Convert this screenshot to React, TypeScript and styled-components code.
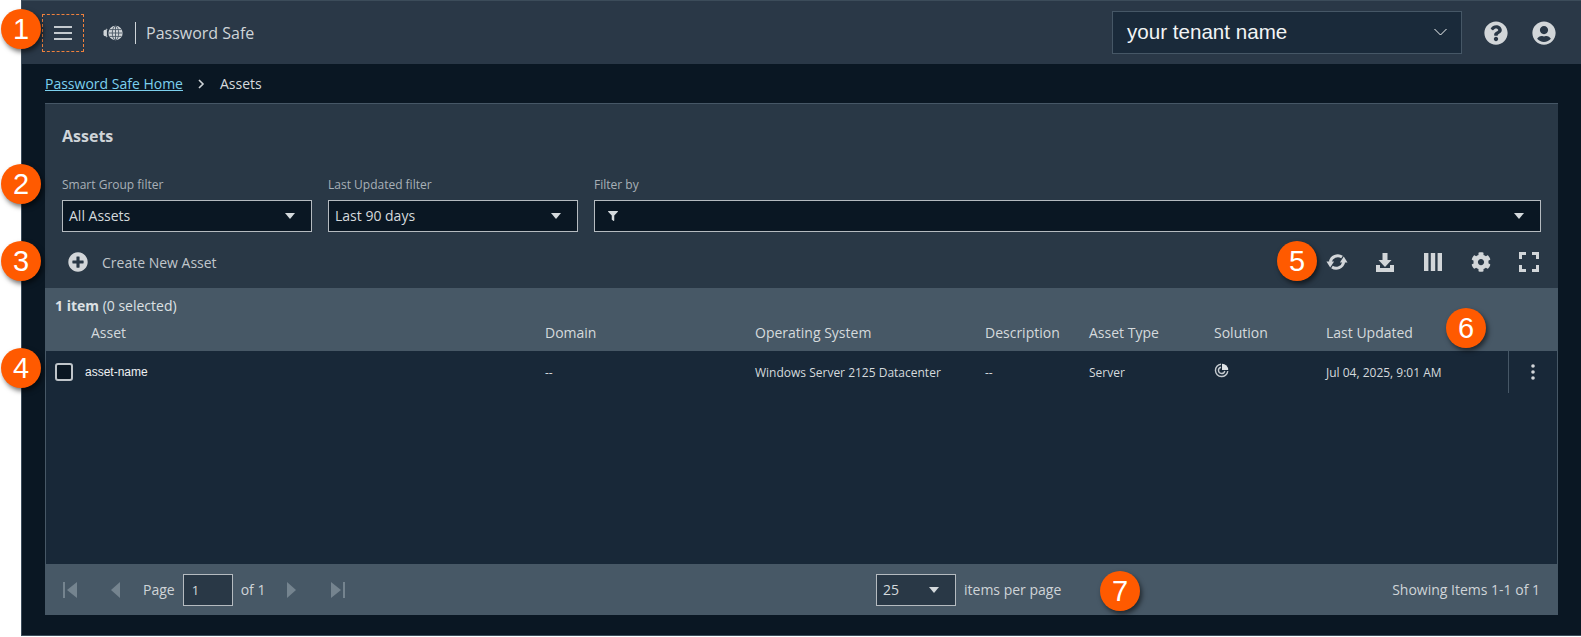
import * as React from 'react';
import styled, { createGlobalStyle } from 'styled-components';
import { FaCog, FaFilter, FaPlusCircle, FaQuestionCircle, FaUserCircle } from 'react-icons/fa';

const GlobalStyle = createGlobalStyle`
    html, body {
        margin: 0;
        padding: 0;
        background: #fff;
        font-family: 'Open Sans', 'Noto Sans', sans-serif;
    }
`;

const Page = styled.div`
    position: relative;
    width: 1581px;
    height: 637px;
    padding-left: 21px;
    box-sizing: border-box;
    overflow: hidden;
`;

const Frame = styled.div`
    height: 636px;
    display: flex;
    flex-direction: column;
    background: #0a1723;
    border-left: 1px solid #3c4c5a;
    border-top: 1px solid #3c4c5a;
    border-bottom: 1px solid #3c4c5a;
    box-sizing: border-box;
`;

const Header = styled.header`
    height: 63px;
    flex: none;
    display: flex;
    align-items: center;
    background: #2a3847;
    padding-left: 20px;
`;

const MenuButton = styled.button`
    width: 42px;
    height: 38px;
    margin-top: 1px;
    padding: 0;
    display: flex;
    align-items: center;
    justify-content: center;
    background: none;
    border: 1px dashed #f0813c;
`;

const Brand = styled.div`
    display: flex;
    align-items: center;
    margin-left: 20px;
    color: #cfd4d8;
    font-size: 16px;
`;

const BrandRule = styled.span`
    width: 1px;
    height: 22px;
    margin: 0 10px 0 12px;
    background: #cfd4d8;
`;

const TenantSelect = styled.div`
    width: 350px;
    height: 43px;
    margin-left: auto;
    padding: 0 14px 2px;
    display: flex;
    align-items: center;
    justify-content: space-between;
    box-sizing: border-box;
    background: #1a2a3a;
    border: 1px solid #465766;
    color: #f2f4f5;
    font-family: 'Liberation Sans', Arial, sans-serif;
    font-size: 20.6px;
`;

const HeaderIcons = styled.div`
    display: flex;
    align-items: center;
    gap: 24px;
    margin: 0 25px 0 22px;
    color: #d2d6d9;
    font-size: 24px;

    svg {
        display: block;
    }
`;

const Breadcrumb = styled.nav`
    height: 39px;
    flex: none;
    padding-left: 23px;
    display: flex;
    align-items: center;
    font-size: 14px;
    color: #d5dadd;
`;

const Crumb = styled.a`
    color: #7cd0ee;
    text-decoration: underline;
`;

const CrumbArrow = styled.span`
    margin: 0 15px;
    display: flex;
`;

const Panel = styled.main`
    width: 1513px;
    height: 512px;
    margin-left: 23px;
    display: flex;
    flex-direction: column;
    background: #293846;
    border-top: 1px solid #465766;
    box-sizing: border-box;
`;

const Title = styled.h1`
    margin: 0;
    padding: 21px 0 0 17px;
    height: 47px;
    box-sizing: border-box;
    font-size: 16px;
    line-height: 22px;
    font-weight: 700;
    color: #cfd4d8;
`;

const Filters = styled.div`
    display: flex;
    gap: 16px;
    padding: 26px 17px 0;
`;

const Filter = styled.label<{ $grow?: boolean }>`
    display: flex;
    flex-direction: column;
    gap: 7px;
    width: ${props => (props.$grow ? 'auto' : '250px')};
    flex: ${props => (props.$grow ? 1 : 'none')};
    font-size: 12px;
    line-height: 16px;
    color: #a8b0b7;
`;

const SelectBox = styled.div`
    height: 32px;
    padding: 0 6px;
    display: flex;
    align-items: center;
    justify-content: space-between;
    box-sizing: border-box;
    background: #0a1723;
    border: 1px solid #b5bbc0;
    color: #d5dadd;
    font-size: 14px;
`;

const Caret = styled.span`
    width: 0;
    height: 0;
    margin-right: 10px;
    border-left: 5px solid transparent;
    border-right: 5px solid transparent;
    border-top: 6px solid #d5dadd;
`;

const Toolbar = styled.div`
    height: 56px;
    flex: none;
    display: flex;
    align-items: center;
    padding: 4px 5px 0 23px;
    box-sizing: border-box;
    color: #bcc3c8;
    font-size: 14px;
`;

const CreateButton = styled.div`
    display: flex;
    align-items: center;
    gap: 14px;
    font-size: 14px;
    color: #c0c6cb;
`;

const ToolIcons = styled.div`
    margin-left: auto;
    display: flex;
    align-items: center;
    color: #d2d6d9;
`;

const ToolIcon = styled.span`
    width: 48px;
    height: 24px;
    display: flex;
    align-items: center;
    justify-content: center;
`;

const Grid = styled.section`
    flex: 1;
    display: flex;
    flex-direction: column;
    background: #475866;
`;

const Count = styled.div`
    height: 32px;
    flex: none;
    padding: 8px 0 0 10px;
    box-sizing: border-box;
    font-size: 14px;
    line-height: 20px;
    color: #dde1e4;

    strong {
        font-weight: 700;
    }
`;

const columns = '499px 210px 230px 104px 125px 112px 182px 48px';

const HeadRow = styled.div`
    height: 31px;
    flex: none;
    display: grid;
    grid-template-columns: ${columns};
    align-items: center;
    padding-bottom: 6px;
    box-sizing: border-box;
    margin-left: 1px;
    font-size: 14px;
    color: #d5dadd;
`;

const HeadCell = styled.div<{ $first?: boolean }>`
    padding-left: ${props => (props.$first ? '45px' : '0')};
    white-space: nowrap;
`;

const Body = styled.div`
    flex: 1;
    margin: 0 1px;
    background: #182838;
`;

const Row = styled.div`
    height: 42px;
    display: grid;
    grid-template-columns: ${columns};
    align-items: center;
    font-size: 12px;
    color: #d5dadd;
`;

const AssetCell = styled.div`
    display: flex;
    align-items: center;
    gap: 12px;
    padding-left: 9px;
    font-family: 'Liberation Sans', Arial, sans-serif;
    font-size: 12px;
    color: #eef0f2;
`;

const Checkbox = styled.span`
    width: 18px;
    height: 18px;
    box-sizing: border-box;
    background: #0a1723;
    border: 2px solid #bfc5ca;
    border-radius: 3px;
`;

const Cell = styled.div`
    white-space: nowrap;
`;

const ActionCell = styled.div`
    height: 42px;
    display: flex;
    align-items: center;
    justify-content: center;
    border-left: 1px solid #465766;
`;

const Footer = styled.footer`
    height: 51px;
    flex: none;
    display: grid;
    grid-template-columns: 830px 1fr auto;
    align-items: center;
    padding: 0 18px 0 17px;
    font-size: 14px;
    color: #cfd4d8;
`;

const Pager = styled.div`
    display: flex;
    align-items: center;
`;

const PagerArrow = styled.span<{ $width: number; $gap?: number }>`
    width: ${props => props.$width}px;
    margin-left: ${props => props.$gap ?? 0}px;
    display: flex;
    color: #75848f;
`;

const PageInput = styled.div`
    width: 50px;
    height: 32px;
    margin: 0 8px;
    padding: 0 8px;
    display: flex;
    align-items: center;
    box-sizing: border-box;
    background: #293846;
    border: 1px solid #b5bbc0;
    font-size: 13px;
    color: #d5dadd;
`;

const PerPage = styled.div`
    display: flex;
    align-items: center;
    gap: 8px;
    margin-left: -16px;
`;

const PerPageSelect = styled(SelectBox)`
    width: 80px;
    background: #293846;
`;

const Badge = styled.span<{ $x: number; $y: number }>`
    position: absolute;
    left: ${props => props.$x - 20}px;
    top: ${props => props.$y - 20}px;
    width: 40px;
    height: 40px;
    display: flex;
    align-items: center;
    justify-content: center;
    border-radius: 50%;
    background: #ff5a00;
    box-shadow: 2px 3px 5px rgba(0, 0, 0, 0.55);
    color: #fff;
    font-family: 'Liberation Sans', Arial, sans-serif;
    font-size: 29px;
`;

const badges = [
    { n: 1, x: 21, y: 29 },
    { n: 2, x: 21, y: 184 },
    { n: 3, x: 21, y: 261 },
    { n: 4, x: 21, y: 368 },
    { n: 5, x: 1297, y: 261 },
    { n: 6, x: 1466, y: 328 },
    { n: 7, x: 1120, y: 591 },
];

const headers = ['Asset', 'Domain', 'Operating System', 'Description', 'Asset Type', 'Solution', 'Last Updated'];

function Globe(): React.ReactElement {
    return (
        <svg width="20" height="16" viewBox="0 0 20 16" fill="none" style={{ marginLeft: -1 }}>
            <circle cx="12.5" cy="8" r="7.2" fill="#cfd4d8" />
            <g stroke="#4a5764" strokeWidth="0.9">
                <ellipse cx="12.5" cy="8" rx="3.2" ry="7" />
                <path d="M5.5 8h14M6.4 4.6h12.2M6.4 11.4h12.2M12.5 1v14" />
            </g>
            <path d="M4 4a6.5 6.5 0 0 0 0 8" stroke="#aab1b7" strokeWidth="1.6" />
            <rect x="0.5" y="4.8" width="3.4" height="6.4" rx="1.7" fill="#cfd4d8" />
        </svg>
    );
}

function Solution(): React.ReactElement {
    return (
        <svg width="15" height="15" viewBox="0 0 15 15" fill="none" stroke="#c4cacf" strokeWidth="1.4">
            <path d="M7 1.2a6.2 6.2 0 1 0 6.8 7" />
            <path d="M7 4.2a3.2 3.2 0 1 0 3.8 3.8" />
            <path d="M8 .8a6.2 6.2 0 0 1 6.2 6.2H8z" fill="#dfe3e6" stroke="none" />
        </svg>
    );
}

function Refresh(): React.ReactElement {
    return (
        <svg width="22" height="22" viewBox="0 0 24 24" fill="#d2d6d9" stroke="none">
            <path d="M17.5 6.6A8.5 8.5 0 0 0 4.6 12" fill="none" stroke="#d2d6d9" strokeWidth="3.2" />
            <polygon points="0.5,11.5 8.8,11.5 4.6,18" />
            <path d="M6.5 17.4A8.5 8.5 0 0 0 19.4 12" fill="none" stroke="#d2d6d9" strokeWidth="3.2" />
            <polygon points="15.2,12.5 23.5,12.5 19.4,6" />
        </svg>
    );
}

function Download(): React.ReactElement {
    return (
        <svg width="18" height="19" viewBox="0 0 18 19" fill="#d2d6d9">
            <rect x="6.5" y="0" width="5" height="7" />
            <polygon points="2.5,7 15.5,7 9,14" />
            <path d="M0 12h4v3h10v-3h4v7H0z" />
        </svg>
    );
}

function Columns(): React.ReactElement {
    return (
        <svg width="20" height="20" viewBox="0 0 20 20" fill="#d2d6d9">
            <rect x="1" y="1" width="4.4" height="18" />
            <rect x="7.8" y="1" width="4.4" height="18" />
            <rect x="14.6" y="1" width="4.4" height="18" />
        </svg>
    );
}

function Fullscreen(): React.ReactElement {
    return (
        <svg width="20" height="20" viewBox="0 0 20 20" fill="none" stroke="#d2d6d9" strokeWidth="3">
            <path d="M1.5 7V1.5H7M13 1.5h5.5V7M18.5 13v5.5H13M7 18.5H1.5V13" />
        </svg>
    );
}

function Triangle({ dir, stop }: { dir: 'left' | 'right'; stop?: boolean }): React.ReactElement {
    const points = dir === 'left' ? '10,0 10,16 1,8' : '1,0 1,16 10,8';
    return (
        <svg width="14" height="16" viewBox="0 0 14 16" fill="currentColor">
            <polygon points={stop ? (dir === 'left' ? '14,0 14,16 4,8' : '0,0 0,16 10,8') : points} />
            {stop && <rect x={dir === 'left' ? 0 : 12} y="0" width="2" height="16" />}
        </svg>
    );
}

export default function App(): React.ReactElement {
    return (
        <Page>
            <GlobalStyle />
            <Frame>
                <Header>
                    <MenuButton>
                        <svg width="18" height="14" viewBox="0 0 18 14" stroke="#c4cacf" strokeWidth="2">
                            <path d="M0 1h18M0 7h18M0 13h18" />
                        </svg>
                    </MenuButton>
                    <Brand>
                        <Globe />
                        <BrandRule />
                        Password Safe
                    </Brand>
                    <TenantSelect>
                        your tenant name
                        <svg width="13" height="8" viewBox="0 0 13 8" fill="none" stroke="#f2f4f5" strokeWidth="1">
                            <path d="M.5 1l6 6 6-6" />
                        </svg>
                    </TenantSelect>
                    <HeaderIcons>
                        <FaQuestionCircle />
                        <FaUserCircle />
                    </HeaderIcons>
                </Header>
                <Breadcrumb>
                    <Crumb>Password Safe Home</Crumb>
                    <CrumbArrow>
                        <svg width="7" height="10" viewBox="0 0 7 10" fill="none" stroke="#cfd4d8" strokeWidth="1.6">
                            <path d="M1 1l4 4-4 4" />
                        </svg>
                    </CrumbArrow>
                    Assets
                </Breadcrumb>
                <Panel>
                    <Title>Assets</Title>
                    <Filters>
                        <Filter>
                            Smart Group filter
                            <SelectBox>
                                All Assets
                                <Caret />
                            </SelectBox>
                        </Filter>
                        <Filter>
                            Last Updated filter
                            <SelectBox>
                                Last 90 days
                                <Caret />
                            </SelectBox>
                        </Filter>
                        <Filter $grow>
                            Filter by
                            <SelectBox>
                                <FaFilter size={10} style={{ marginLeft: 7 }} />
                                <Caret />
                            </SelectBox>
                        </Filter>
                    </Filters>
                    <Toolbar>
                        <CreateButton>
                            <FaPlusCircle size={20} color="#d2d6d9" />
                            Create New Asset
                        </CreateButton>
                        <ToolIcons>
                            <ToolIcon><Refresh /></ToolIcon>
                            <ToolIcon><Download /></ToolIcon>
                            <ToolIcon><Columns /></ToolIcon>
                            <ToolIcon><FaCog size={20} /></ToolIcon>
                            <ToolIcon><Fullscreen /></ToolIcon>
                        </ToolIcons>
                    </Toolbar>
                    <Grid>
                        <Count>
                            <strong>1 item</strong> (0 selected)
                        </Count>
                        <HeadRow>
                            {headers.map((h, i) => (
                                <HeadCell key={h} $first={i === 0}>{h}</HeadCell>
                            ))}
                        </HeadRow>
                        <Body>
                            <Row>
                                <AssetCell>
                                    <Checkbox />
                                    asset-name
                                </AssetCell>
                                <Cell>--</Cell>
                                <Cell>Windows Server 2125 Datacenter</Cell>
                                <Cell>--</Cell>
                                <Cell>Server</Cell>
                                <Cell><Solution /></Cell>
                                <Cell>Jul 04, 2025, 9:01 AM</Cell>
                                <ActionCell>
                                    <svg width="4" height="16" viewBox="0 0 4 16" fill="#d2d6d9">
                                        <circle cx="2" cy="2" r="1.8" />
                                        <circle cx="2" cy="8" r="1.8" />
                                        <circle cx="2" cy="14" r="1.8" />
                                    </svg>
                                </ActionCell>
                            </Row>
                        </Body>
                        <Footer>
                            <Pager>
                                <PagerArrow $width={47} $gap={1}><Triangle dir="left" stop /></PagerArrow>
                                <PagerArrow $width={33}><Triangle dir="left" /></PagerArrow>
                                Page
                                <PageInput>1</PageInput>
                                of 1
                                <PagerArrow $width={45} $gap={21}><Triangle dir="right" /></PagerArrow>
                                <PagerArrow $width={20}><Triangle dir="right" stop /></PagerArrow>
                            </Pager>
                            <PerPage>
                                <PerPageSelect>
                                    25
                                    <Caret />
                                </PerPageSelect>
                                items per page
                            </PerPage>
                            <span>Showing Items 1-1 of 1</span>
                        </Footer>
                    </Grid>
                </Panel>
            </Frame>
            {badges.map(b => (
                <Badge key={b.n} $x={b.x} $y={b.y}>{b.n}</Badge>
            ))}
        </Page>
    );
}
